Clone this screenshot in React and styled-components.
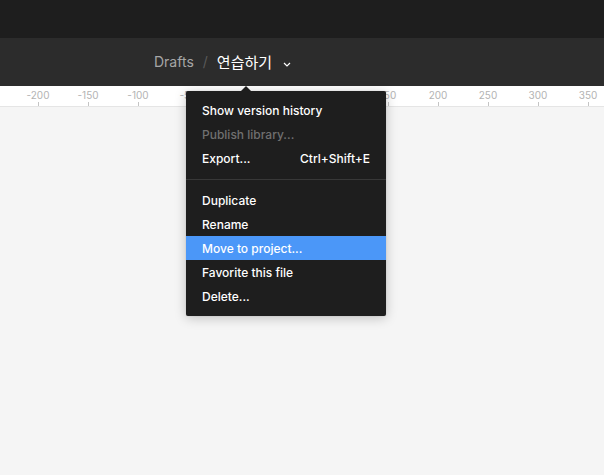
import React from 'react'
import styled, { createGlobalStyle } from 'styled-components'

const GlobalStyle = createGlobalStyle`
  html, body {
    margin: 0;
    padding: 0;
    height: 100%;
    background: #f5f5f5;
    font-family: Inter, "Noto Sans", "Noto Sans CJK KR", sans-serif;
  }
  #root {
    height: 100%;
  }
`

const Page = styled.div`
  position: relative;
  width: 604px;
  height: 475px;
  overflow: hidden;
  background: #f5f5f5;
  display: flex;
  flex-direction: column;
`

const TopBar = styled.div`
  height: 38px;
  background: #1e1e1e;
  flex-shrink: 0;
`

const TitleBar = styled.div`
  height: 48px;
  background: #2c2c2c;
  display: flex;
  align-items: center;
  padding-left: 154px;
  flex-shrink: 0;
  font-size: 14px;
`

const Crumb = styled.span`
  color: ${props => (props.current ? '#ffffff' : '#a6a6a6')};
  font-size: ${props => (props.current ? '15px' : '14px')};
  line-height: 1;
`

const Slash = styled.span`
  color: #5a5a5a;
  margin: 0 9px 0 9px;
  line-height: 1;
`

const Chevron = styled.svg`
  margin-left: 11px;
  margin-top: 5px;
`

const Ruler = styled.div`
  height: 20px;
  background: #ffffff;
  border-bottom: 1px solid #e5e5e5;
  display: flex;
  padding-left: 13px;
  flex-shrink: 0;
`

const Mark = styled.div`
  width: 50px;
  flex-shrink: 0;
  display: flex;
  flex-direction: column;
  align-items: center;
  justify-content: space-between;
  color: #b3b3b3;
  font-size: 10px;
  padding-top: 3px;
`

const Tick = styled.div`
  width: 1px;
  height: 4px;
  background: #c4c4c4;
`

const Canvas = styled.div`
  flex: 1;
  background: #f5f5f5;
`

const Menu = styled.div`
  position: absolute;
  left: 186px;
  top: 91px;
  width: 200px;
  padding: 7px 0 8px;
  background: #1e1e1e;
  border-radius: 2px;
  box-shadow: 0 2px 12px rgba(0, 0, 0, 0.22), 0 0 1px rgba(0, 0, 0, 0.3);
  font-size: 12px;
  font-weight: 500;
`

const Caret = styled.div`
  position: absolute;
  left: 55px;
  top: -5px;
  width: 0;
  height: 0;
  border-left: 5px solid transparent;
  border-right: 5px solid transparent;
  border-bottom: 5px solid #1e1e1e;
`

const Item = styled.div`
  height: 24px;
  display: flex;
  align-items: center;
  justify-content: space-between;
  padding: 0 16px;
  color: ${props => (props.disabled ? '#707070' : '#ffffff')};
  background: ${props => (props.active ? '#4b97f8' : 'transparent')};
`

const Shortcut = styled.span`
  color: #ffffff;
`

const Separator = styled.div`
  height: 1px;
  background: #383838;
  margin: 9px 0 8px;
`

const ticks = [-200, -150, -100, -50, 0, 50, 100, 150, 200, 250, 300, 350]

export default function App () {
  return (
    <Page>
      <GlobalStyle />
      <TopBar />
      <TitleBar>
        <Crumb>Drafts</Crumb>
        <Slash>/</Slash>
        <Crumb current>연습하기</Crumb>
        <Chevron width='8' height='5' viewBox='0 0 8 5'>
          <path d='M1 1 L4 4 L7 1' fill='none' stroke='#ffffff' strokeWidth='1.2' />
        </Chevron>
      </TitleBar>
      <Ruler>
        {ticks.map(t => (
          <Mark key={t}>
            <span>{t}</span>
            <Tick />
          </Mark>
        ))}
      </Ruler>
      <Canvas />
      <Menu>
        <Caret />
        <Item>Show version history</Item>
        <Item disabled>Publish library...</Item>
        <Item>
          Export...<Shortcut>Ctrl+Shift+E</Shortcut>
        </Item>
        <Separator />
        <Item>Duplicate</Item>
        <Item>Rename</Item>
        <Item active>Move to project...</Item>
        <Item>Favorite this file</Item>
        <Item>Delete...</Item>
      </Menu>
    </Page>
  )
}
